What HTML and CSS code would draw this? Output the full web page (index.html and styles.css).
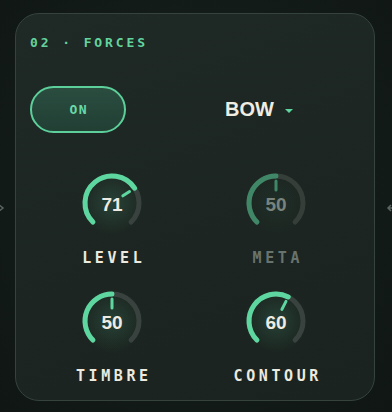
FILE: index.html
```html
<!DOCTYPE html>
<html lang="en">
<head>
    <meta charset="UTF-8">
    <meta name="viewport" content="width=device-width, initial-scale=1.0">
    <title>Forces</title>
    <link rel="stylesheet" href="styles.css">
</head>
<body>
    <svg class="edge edge-left" width="8" height="10" viewBox="0 0 8 10">
        <path d="M1 1 L6 5 L1 9" fill="none" stroke="#5b6661" stroke-width="1.5"/>
    </svg>
    <svg class="edge edge-right" width="8" height="10" viewBox="0 0 8 10">
        <path d="M8 5 H2 M5 2 L2 5 L5 8" fill="none" stroke="#5b6661" stroke-width="1.5"/>
    </svg>

    <div class="panel">
        <div class="panel-title">02 &middot; FORCES</div>

        <div class="top-row">
            <button class="toggle">ON</button>
            <div class="mode">
                <span class="mode-name">BOW</span>
                <span class="caret"></span>
            </div>
        </div>

        <div class="knobs">
            <!-- level: 71 -->
            <div class="knob-cell">
                <div class="knob">
                    <svg width="64" height="64" viewBox="0 0 64 64">
                        <path class="track" d="M12.91 51.09 A27 27 0 1 1 51.09 51.09"/>
                        <path class="value" d="M12.91 51.09 A27 27 0 1 1 54.56 17.16"/>
                        <line class="tick" x1="42.86" y1="24.86" x2="49.55" y2="20.46"/>
                    </svg>
                    <span class="knob-value">71</span>
                </div>
                <div class="knob-label">LEVEL</div>
            </div>

            <!-- meta: 50, disabled -->
            <div class="knob-cell disabled">
                <div class="knob">
                    <svg width="64" height="64" viewBox="0 0 64 64">
                        <path class="track" d="M12.91 51.09 A27 27 0 1 1 51.09 51.09"/>
                        <path class="value" d="M12.91 51.09 A27 27 0 0 1 32 5"/>
                        <line class="tick" x1="32" y1="19" x2="32" y2="10"/>
                    </svg>
                    <span class="knob-value">50</span>
                </div>
                <div class="knob-label">META</div>
            </div>

            <!-- timbre: 50 -->
            <div class="knob-cell">
                <div class="knob">
                    <svg width="64" height="64" viewBox="0 0 64 64">
                        <path class="track" d="M12.91 51.09 A27 27 0 1 1 51.09 51.09"/>
                        <path class="value" d="M12.91 51.09 A27 27 0 0 1 32 5"/>
                        <line class="tick" x1="32" y1="19" x2="32" y2="10"/>
                    </svg>
                    <span class="knob-value">50</span>
                </div>
                <div class="knob-label">TIMBRE</div>
            </div>

            <!-- contour: 60 -->
            <div class="knob-cell">
                <div class="knob">
                    <svg width="64" height="64" viewBox="0 0 64 64">
                        <path class="track" d="M12.91 51.09 A27 27 0 1 1 51.09 51.09"/>
                        <path class="value" d="M12.91 51.09 A27 27 0 0 1 44.26 7.94"/>
                        <line class="tick" x1="37.90" y1="20.42" x2="41.99" y2="12.40"/>
                    </svg>
                    <span class="knob-value">60</span>
                </div>
                <div class="knob-label">CONTOUR</div>
            </div>
        </div>
    </div>
</body>
</html>
```

FILE: styles.css
```css
body {
    margin: 0;
    width: 392px;
    height: 412px;
    overflow: hidden;
    position: relative;
    box-sizing: border-box;
    padding: 13px 17px 11px 15px;
    background: radial-gradient(ellipse at 50% 45%, #18221e 0%, #131b18 60%, #0f1613 100%);
    font-family: "Liberation Sans", Arial, sans-serif;
}

.edge {
    position: absolute;
    top: 203px;
}
.edge-left {
    left: -3px;
}
.edge-right {
    right: -2px;
}

.panel {
    height: 388px;
    box-sizing: border-box;
    border: 1.5px solid #36433d;
    border-radius: 24px;
    background: linear-gradient(160deg, #1f2925 0%, #1c2521 60%, #1a231f 100%);
    padding: 21px 16px 0 14px;
}

.panel-title {
    font-family: "DejaVu Sans Mono", monospace;
    font-weight: bold;
    font-size: 13px;
    line-height: 16px;
    letter-spacing: 2.9px;
    color: #62d39f;
}

.top-row {
    margin-top: 35px;
    display: grid;
    grid-template-columns: 1fr 1fr;
    align-items: center;
}

.toggle {
    width: 96px;
    height: 47px;
    box-sizing: border-box;
    border: 2px solid #5ccf9b;
    border-radius: 24px;
    background: linear-gradient(180deg, #2a4d40 0%, #223f34 100%);
    color: #6ad8a6;
    font-family: "DejaVu Sans Mono", monospace;
    font-weight: bold;
    font-size: 13px;
    letter-spacing: 1.5px;
    padding: 0 0 0 1.5px;
}

.mode {
    display: flex;
    align-items: center;
    gap: 11px;
    padding-left: 31px;
}

.mode-name {
    font-weight: bold;
    font-size: 20px;
    color: #efece2;
}

.caret {
    width: 0;
    height: 0;
    margin-top: 2px;
    border-left: 4.5px solid transparent;
    border-right: 4.5px solid transparent;
    border-top: 4.5px solid #5ed6a0;
}

.knobs {
    margin-top: 38px;
    display: grid;
    grid-template-columns: 1fr 1fr;
    row-gap: 22px;
}

.knob-cell {
    display: flex;
    flex-direction: column;
    align-items: center;
}

.knob {
    position: relative;
    width: 64px;
    height: 64px;
    border-radius: 50%;
    background: radial-gradient(circle at 50% 50%, rgba(94, 214, 160, 0.16) 0%, rgba(94, 214, 160, 0.06) 45%, rgba(0, 0, 0, 0) 70%);
}

.knob svg {
    display: block;
}

.track {
    fill: none;
    stroke: #39423e;
    stroke-width: 5;
    stroke-linecap: round;
}

.value {
    fill: none;
    stroke: #5ed6a0;
    stroke-width: 5;
    stroke-linecap: round;
}

.tick {
    stroke: #5ed6a0;
    stroke-width: 3;
    stroke-linecap: round;
}

.knob-value {
    position: absolute;
    left: 0;
    right: 0;
    top: 24px;
    text-align: center;
    font-weight: bold;
    font-size: 19px;
    line-height: 20px;
    color: #eeebe2;
}

.knob-label {
    margin-top: 14px;
    font-family: "DejaVu Sans Mono", monospace;
    font-weight: bold;
    font-size: 15px;
    line-height: 18px;
    letter-spacing: 3.6px;
    padding-left: 3.6px;
    color: #ece9df;
}

.disabled .knob {
    background: radial-gradient(circle at 50% 50%, rgba(94, 214, 160, 0.05) 0%, rgba(0, 0, 0, 0) 70%);
}
.disabled .value,
.disabled .tick {
    stroke: #3f8767;
}
.disabled .track {
    stroke: #363e3a;
}
.disabled .knob-value {
    color: #78837e;
}
.disabled .knob-label {
    color: #68736e;
}
```
